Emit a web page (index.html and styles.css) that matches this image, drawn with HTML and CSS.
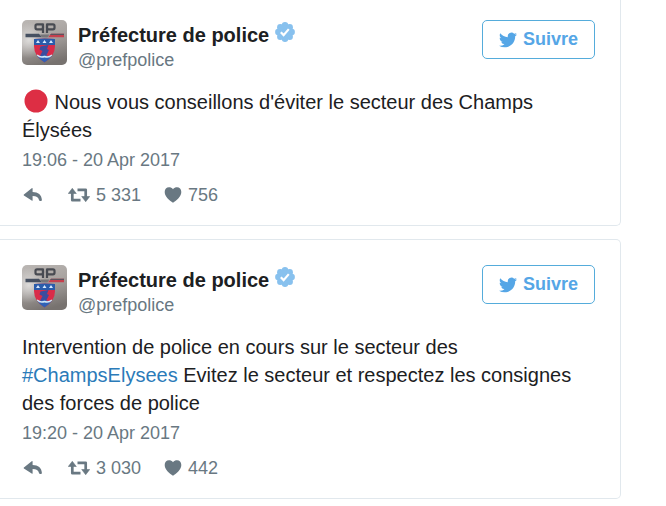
FILE: index.html
```html
<!DOCTYPE html>
<html lang="fr">
<head>
  <meta charset="UTF-8" />
  <meta name="viewport" content="width=device-width, initial-scale=1.0"/>
  <title>Préfecture de police</title>
  <link rel="stylesheet" href="styles.css">
</head>
<body>
  <!-- Icônes partagées -->
  <svg class="sprite" aria-hidden="true">
    <defs>
      <linearGradient id="metal" x1="0.2" y1="0" x2="0.5" y2="1">
        <stop offset="0" stop-color="#b9b5b2"/>
        <stop offset="0.45" stop-color="#a8a3a0"/>
        <stop offset="1" stop-color="#77726f"/>
      </linearGradient>
      <radialGradient id="glow" cx="0.15" cy="0.45" r="0.4">
        <stop offset="0" stop-color="#fff" stop-opacity="0.6"/>
        <stop offset="1" stop-color="#fff" stop-opacity="0"/>
      </radialGradient>
      <clipPath id="shield">
        <path d="M12 19q10.500-1 21 0v7q0 10-10.500 16.500q-10.500-6.500-10.500-16.500z"/>
      </clipPath>
    </defs>
    <symbol id="logo" viewBox="0 0 45 45">
      <rect width="45" height="45" fill="url(#metal)"/>
      <rect width="45" height="45" fill="url(#glow)"/>
      <g fill="none" stroke="#484b52" stroke-width="2.200">
        <rect x="13.500" y="4.300" width="7.500" height="5" rx="1.500"/>
        <rect x="25" y="4.300" width="7.500" height="5" rx="1.500"/>
        <path d="M21 3.500v9.500M25 3.500v9.500"/>
      </g>
      <path d="M3.500 13.700h13.500l3 3.500H3.500z" fill="#465061"/>
      <path d="M42 13.700H29l-3 3.500h16z" fill="#c5404e"/>
      <path d="M29 13.700h13v1.300H28z" fill="#5a5560"/>
      <path d="M18 14.500h9.500l-2 3h-5.500z" fill="#77767a"/>
      <g clip-path="url(#shield)">
        <rect x="12" y="18" width="21" height="25" fill="#d92c49"/>
        <rect x="12" y="18" width="21" height="7" fill="#2a5cab"/>
        <path d="M14 23l2-3 2 3zM20.500 23l2-3 2 3zM27 23l2-3 2 3z" fill="#d8eaff"/>
        <path d="M18.500 26.500l8-1.500-1.500 4 2 1-3 6h-6l2.500-5-3-1.500z" fill="#3c4c9e"/>
        <path d="M12 34.500q5 3 10.500 0q5 3 10.500 0v8.500H12z" fill="#2f62b5"/>
        <path d="M15 35q3.500 3 7.500 1.500q4 1.500 7.500-1.500" fill="none" stroke="#d3e8f8" stroke-width="1.500"/>
      </g>
    </symbol>
    <symbol id="verified" viewBox="0 0 20 20">
      <g fill="#88c1ee">
        <circle cx="10" cy="10" r="8"/>
        <circle cx="10" cy="3.300" r="3.200"/>
        <circle cx="14.700" cy="5.300" r="3.200"/>
        <circle cx="16.700" cy="10" r="3.200"/>
        <circle cx="14.700" cy="14.700" r="3.200"/>
        <circle cx="10" cy="16.700" r="3.200"/>
        <circle cx="5.300" cy="14.700" r="3.200"/>
        <circle cx="3.300" cy="10" r="3.200"/>
        <circle cx="5.300" cy="5.300" r="3.200"/>
      </g>
      <path d="M5.800 10.300l2.800 2.800 5.200-6" fill="none" stroke="#fff" stroke-width="2.200"/>
    </symbol>
    <symbol id="bird" viewBox="0 0 24 24">
      <path fill="currentColor" d="M23.953 4.57a10 10 0 01-2.825.775 4.958 4.958 0 002.163-2.723c-.951.555-2.005.959-3.127 1.184a4.92 4.92 0 00-8.384 4.482C7.69 8.095 4.067 6.13 1.64 3.162a4.822 4.822 0 00-.666 2.475c0 1.71.87 3.213 2.188 4.096a4.904 4.904 0 01-2.228-.616v.06a4.923 4.923 0 003.946 4.827 4.996 4.996 0 01-2.212.085 4.936 4.936 0 004.604 3.417 9.867 9.867 0 01-6.102 2.105c-.39 0-.779-.023-1.17-.067a13.995 13.995 0 007.557 2.209c9.053 0 13.998-7.496 13.998-13.985 0-.21 0-.42-.015-.63A9.935 9.935 0 0024 4.59z"/>
    </symbol>
    <symbol id="reply" viewBox="0 0 20 16">
      <path fill="currentColor" d="M.9 7.500L8.700 1.300q.9-.6.900.4v3.200c5.600 0 9 2.900 9.300 8q0 1.100-1 1.100h-.8q-.9 0-1.100-.9c-.6-2.900-2.500-4-6.400-4v4.100q0 1-.9.4L.9 8.500q-.6-.5 0-1z"/>
    </symbol>
    <symbol id="retweet" viewBox="0 0 22 16">
      <g fill="none" stroke="currentColor" stroke-width="2.700" stroke-linejoin="round">
        <path d="M4.300 6v7.200h8.200M9.500 2.800h8.200V10"/>
      </g>
      <path fill="currentColor" d="M4.300 1.300L8.300 6.500H.3zM17.700 14.700L13.700 9.500h8z" stroke="currentColor" stroke-width="0.600" stroke-linejoin="round"/>
    </symbol>
    <symbol id="heart" viewBox="0 0 18 16">
      <path fill="currentColor" d="M9 2.300C10 .9 11.500.3 13 .3c2.500 0 4.300 2 4.300 4.700 0 4.500-4.600 8.300-8.300 10.800C5.300 13.300.7 9.500.7 5 .7 2.300 2.500.3 5 .3c1.500 0 3 .6 4 2z"/>
    </symbol>
    <symbol id="ball" viewBox="0 0 24 24">
      <circle cx="12" cy="12" r="11.500" fill="#dd2e44"/>
    </symbol>
  </svg>

  <main class="feed">
    <article class="tweet tweet-first">
      <header class="tweet-header">
        <svg class="avatar" role="img" aria-label="Préfecture de police"><use href="#logo"/></svg>
        <div class="author">
          <a href="#" class="name">Préfecture de police<svg class="badge" role="img" aria-label="Compte certifié"><use href="#verified"/></svg></a>
          <a href="#" class="handle">@prefpolice</a>
        </div>
        <button type="button" class="follow"><svg class="bird" aria-hidden="true"><use href="#bird"/></svg>Suivre</button>
      </header>
      <p class="text"><svg class="ball" aria-hidden="true"><use href="#ball"/></svg> Nous vous conseillons d'éviter le secteur des Champs Élysées</p>
      <a href="#" class="date"><time datetime="2017-04-20T19:06">19:06 - 20 Apr 2017</time></a>
      <div class="actions">
        <a href="#" class="reply" aria-label="Répondre"><svg class="icon"><use href="#reply"/></svg></a>
        <a href="#" class="retweet"><svg class="icon icon-wide" aria-hidden="true"><use href="#retweet"/></svg>5 331</a>
        <a href="#" class="like"><svg class="icon icon-heart" aria-hidden="true"><use href="#heart"/></svg>756</a>
      </div>
    </article>

    <article class="tweet">
      <header class="tweet-header">
        <svg class="avatar" role="img" aria-label="Préfecture de police"><use href="#logo"/></svg>
        <div class="author">
          <a href="#" class="name">Préfecture de police<svg class="badge" role="img" aria-label="Compte certifié"><use href="#verified"/></svg></a>
          <a href="#" class="handle">@prefpolice</a>
        </div>
        <button type="button" class="follow"><svg class="bird" aria-hidden="true"><use href="#bird"/></svg>Suivre</button>
      </header>
      <p class="text">Intervention de police en cours sur le secteur des <a href="#" class="hashtag">#ChampsElysees</a> Evitez le secteur et respectez les consignes des forces de police</p>
      <a href="#" class="date"><time datetime="2017-04-20T19:20">19:20 - 20 Apr 2017</time></a>
      <div class="actions">
        <a href="#" class="reply" aria-label="Répondre"><svg class="icon"><use href="#reply"/></svg></a>
        <a href="#" class="retweet"><svg class="icon icon-wide" aria-hidden="true"><use href="#retweet"/></svg>3 030</a>
        <a href="#" class="like"><svg class="icon icon-heart" aria-hidden="true"><use href="#heart"/></svg>442</a>
      </div>
    </article>
  </main>
</body>
</html>
```

FILE: styles.css
```css
* {
  margin: 0;
  padding: 0;
  box-sizing: border-box;
}

body {
  font-family: "Liberation Sans", Arial, sans-serif;
  background: #fff;
  color: #1c2022;
}

a {
  color: inherit;
  text-decoration: none;
}

.sprite {
  display: block;
  width: 0;
  height: 0;
}

.feed {
  display: flex;
  flex-direction: column;
  gap: 13px;
  padding-right: 45px;
}

/* Carte d'un tweet */
.tweet {
  padding: 25px 25px 18px 22px;
  border: 1px solid #e1e8ed;
  border-left: none;
  border-radius: 0 5px 5px 0;
}

.tweet-first {
  padding-top: 20px;
  border-top: none;
  border-top-right-radius: 0;
}

.tweet-header {
  display: flex;
  align-items: flex-start;
  gap: 11px;
  margin-bottom: 18px;
}

.avatar {
  flex: none;
  width: 45px;
  height: 45px;
  border-radius: 5px;
}

.author {
  flex: 1;
  display: flex;
  flex-direction: column;
  align-items: flex-start;
}

.name {
  display: flex;
  font-size: 20px;
  font-weight: bold;
  line-height: 30px;
}

.badge {
  width: 20px;
  height: 20px;
  margin: 2px 0 0 6px;
}

.handle {
  color: #697882;
  font-size: 18px;
  line-height: 20px;
}

.follow {
  display: flex;
  align-items: center;
  gap: 6px;
  height: 39px;
  padding: 0 16px;
  border: 1px solid #55acdb;
  border-radius: 5px;
  background: #fff;
  color: #55a6e6;
  font-family: inherit;
  font-size: 18px;
  font-weight: bold;
  cursor: pointer;
}

.follow:hover {
  background: #f0f8fe;
}

.bird {
  width: 18px;
  height: 18px;
}

.text {
  font-size: 20px;
  line-height: 28px;
}

.ball {
  width: 24px;
  height: 24px;
  margin: 0 1px 0 2px;
  vertical-align: -4px;
}

.hashtag {
  color: #2b7bb9;
}

.date {
  display: block;
  margin-top: 4px;
  color: #697882;
  font-size: 18px;
  line-height: 24px;
}

/* Répondre, retweeter, aimer */
.actions {
  display: flex;
  margin-top: 11px;
  color: #697882;
  font-size: 18px;
  line-height: 24px;
}

.actions a {
  display: flex;
  align-items: center;
  gap: 6px;
}

.reply {
  width: 46px;
}

.retweet {
  width: 96px;
}

.icon {
  width: 20px;
  height: 16px;
  margin-left: 1px;
}

.icon-wide {
  width: 22px;
  margin-left: 0;
}

.icon-heart {
  width: 18px;
  margin-left: 0;
}
```
